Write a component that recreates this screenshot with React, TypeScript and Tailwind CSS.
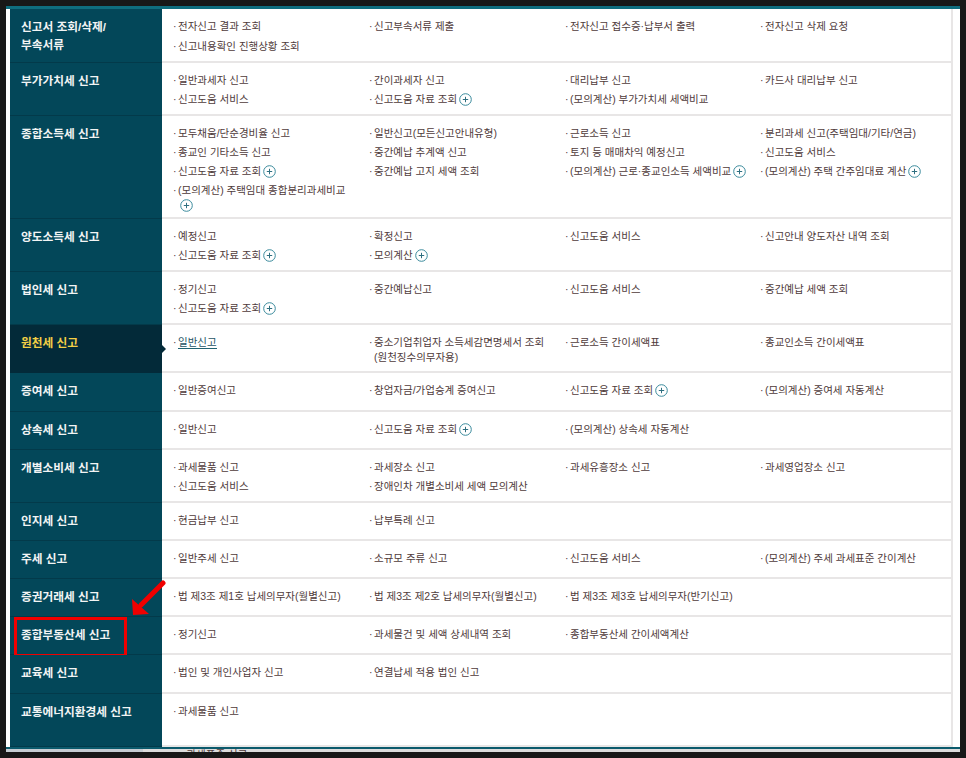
const font = { fontFamily: '"Liberation Sans", "Noto Sans CJK KR", sans-serif' };

type Item = string | { text: string; plus?: boolean; plusBelow?: boolean; on?: boolean; wrap?: string };

interface Row {
  title: string;
  title2?: string;
  h: number;
  active?: boolean;
  boxed?: boolean;
  loose?: boolean;
  items: Item[];
}

const p = (text: string): Item => ({ text, plus: true });

const rows: Row[] = [
  {
    title: "신고서 조회/삭제/",
    title2: "부속서류",
    h: 54,
    loose: true,
    items: ["전자신고 결과 조회", "신고부속서류 제출", "전자신고 접수증·납부서 출력", "전자신고 삭제 요청", "신고내용확인 진행상황 조회"],
  },
  {
    title: "부가가치세 신고",
    h: 53,
    items: ["일반과세자 신고", "간이과세자 신고", "대리납부 신고", "카드사 대리납부 신고", "신고도움 서비스", p("신고도움 자료 조회"), "(모의계산) 부가가치세 세액비교"],
  },
  {
    title: "종합소득세 신고",
    h: 103,
    items: [
      "모두채움/단순경비율 신고",
      "일반신고(모든신고안내유형)",
      "근로소득 신고",
      "분리과세 신고(주택임대/기타/연금)",
      "종교인 기타소득 신고",
      "중간예납 추계액 신고",
      "토지 등 매매차익 예정신고",
      "신고도움 서비스",
      p("신고도움 자료 조회"),
      "중간예납 고지 세액 조회",
      p("(모의계산) 근로·종교인소득 세액비교"),
      p("(모의계산) 주택 간주임대료 계산"),
      { text: "(모의계산) 주택임대 종합분리과세비교", plusBelow: true },
    ],
  },
  {
    title: "양도소득세 신고",
    h: 53,
    items: ["예정신고", "확정신고", "신고도움 서비스", "신고안내 양도자산 내역 조회", p("신고도움 자료 조회"), p("모의계산")],
  },
  {
    title: "법인세 신고",
    h: 53,
    items: ["정기신고", "중간예납신고", "신고도움 서비스", "중간예납 세액 조회", p("신고도움 자료 조회")],
  },
  {
    title: "원천세 신고",
    h: 48,
    active: true,
    items: [{ text: "일반신고", on: true }, { text: "중소기업취업자 소득세감면명세서 조회", wrap: "(원천징수의무자용)" }, "근로소득 간이세액표", "종교인소득 간이세액표"],
  },
  {
    title: "증여세 신고",
    h: 39,
    items: ["일반증여신고", "창업자금/가업승계 증여신고", p("신고도움 자료 조회"), "(모의계산) 증여세 자동계산"],
  },
  {
    title: "상속세 신고",
    h: 38,
    items: ["일반신고", p("신고도움 자료 조회"), "(모의계산) 상속세 자동계산"],
  },
  {
    title: "개별소비세 신고",
    h: 53,
    items: ["과세물품 신고", "과세장소 신고", "과세유흥장소 신고", "과세영업장소 신고", "신고도움 서비스", "장애인차 개별소비세 세액 모의계산"],
  },
  { title: "인지세 신고", h: 38, items: ["현금납부 신고", "납부특례 신고"] },
  {
    title: "주세 신고",
    h: 38,
    items: ["일반주세 신고", "소규모 주류 신고", "신고도움 서비스", "(모의계산) 주세 과세표준 간이계산"],
  },
  {
    title: "증권거래세 신고",
    h: 38,
    items: ["법 제3조 제1호 납세의무자(월별신고)", "법 제3조 제2호 납세의무자(월별신고)", "법 제3조 제3호 납세의무자(반기신고)"],
  },
  {
    title: "종합부동산세 신고",
    h: 38,
    boxed: true,
    items: ["정기신고", "과세물건 및 세액 상세내역 조회", "종합부동산세 간이세액계산"],
  },
  { title: "교육세 신고", h: 39, items: ["법인 및 개인사업자 신고", "연결납세 적용 법인 신고"] },
  { title: "교통에너지환경세 신고", h: 53, items: ["과세물품 신고"] },
];

const PlusIcon = () => (
  <svg width="13" height="13" viewBox="0 0 13 13" className="inline-block ml-[2px] align-[-3px]">
    <circle cx="6.5" cy="6.5" r="5.8" fill="#fff" stroke="#3a8a9c" strokeWidth="1" />
    <path d="M3.8 6.5h5.4M6.5 3.8v5.4" stroke="#2f6f80" strokeWidth="1" />
  </svg>
);

const Cell = ({ item }: { item: Item }) => {
  const it = typeof item === "string" ? { text: item } : item;
  return (
    <li className="relative pl-[16px] pr-[2px] text-[10.5px] leading-[19px] text-[#4f3b3b]">
      <span className="absolute left-[11px] top-0">·</span>
      <span className={it.on ? "border-b border-[#1f6272] text-[#1f5566]" : ""}>{it.text}</span>
      {it.plus && <PlusIcon />}
      {it.wrap && <div className="-mt-[2px] leading-[14px]">{it.wrap}</div>}
      {it.plusBelow && (
        <div className="-mt-[2px] leading-[14px]">
          <PlusIcon />
        </div>
      )}
    </li>
  );
};

export default function App() {
  return (
    <div className="relative h-[758px] w-[966px] overflow-hidden bg-[#181818] pt-[6px] pl-[6px]" style={font}>
      <div className="h-[746px] w-[954px] border-t-[3px] border-[#0f6d7e] bg-white">
        <div className="h-[740px] border-b-2 border-[#0b5a6c]">
          <div className="h-[738px] w-[947px] border-r-2 border-l-[4px] border-r-[#e8e6e6] border-l-white bg-white">
            {rows.map((row, i) => (
              <div key={i} className="flex" style={{ height: row.h }}>
                <div
                  className={`relative w-[152px] shrink-0 border-b pl-[11px] pt-[9px] text-[11.7px] font-bold leading-[18px] ${
                    row.active ? "border-[#032a39] bg-[#032a39] text-[#f3cf45]" : "border-[#033a4a] bg-[#034759] text-[#f2f4f4]"
                  }`}
                >
                  <div>{row.title}</div>
                  {row.title2 && <div>{row.title2}</div>}
                  {row.active && (
                    <span className="absolute left-[151px] top-[19px] h-0 w-0 border-y-[5px] border-l-[5px] border-y-transparent border-l-[#032a39]" />
                  )}
                  {row.boxed && (
                    <span className="absolute left-[4px] top-0 h-[40px] w-[113px] border-[3px] border-[#f00000]" />
                  )}
                </div>
                <ul
                  className={`grid flex-1 grid-cols-[196px_196px_195px_1fr] content-start border-b-2 border-[#e8e6e6] pt-[8px] ${
                    row.loose ? "gap-y-[1px]" : ""
                  }`}
                >
                  {row.items.map((item, j) => (
                    <Cell key={j} item={item} />
                  ))}
                </ul>
              </div>
            ))}
          </div>
        </div>
        <div className="flex h-[3px] bg-[#dcdcdc]">
          <div className="h-full w-[137px] bg-[#c5ccd2]" />
          <div className="h-full overflow-hidden pl-[37px] text-[10.5px] leading-[16px] text-[#4f3b3b]">
            <div className="-mt-[3px]">· 과세표준 신고</div>
          </div>
        </div>
      </div>
      <svg className="absolute left-[130px] top-[578px]" width="36" height="40" viewBox="0 0 36 40">
        <path d="M33 5 L11 27" stroke="#f00000" strokeWidth="5" strokeLinecap="round" />
        <path d="M3 37 L2 21 L19 36 Z" fill="#f00000" />
      </svg>
    </div>
  );
}
